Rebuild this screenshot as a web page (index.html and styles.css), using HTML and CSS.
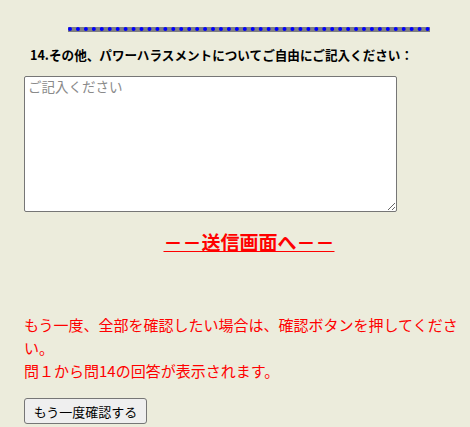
FILE: index.html
```html
<!DOCTYPE html>
<html lang="ja">
<head>
  <meta charset="UTF-8" />
  <title>パワーハラスメント アンケート</title>
  <link rel="stylesheet" href="styles.css">
</head>
<body>

<div class="wrap">
  <hr class="dots" />
  <p class="q">14.その他、パワーハラスメントについてご自由にご記入ください：</p>
  <textarea class="answer" placeholder="ご記入ください"></textarea>
  <p class="send"><a href="#">－－送信画面へ－－</a></p>
  <p class="note">もう一度、全部を確認したい場合は、確認ボタンを押してください。<br>問１から問14の回答が表示されます。</p>
  <button class="again">もう一度確認する</button>
</div>

</body>
</html>
```

FILE: styles.css
```css
body {
  margin: 0;
  background: #ececdc;
  font-family: "Noto Sans CJK JP", "Noto Sans", sans-serif;
  color: #000;
}
.wrap {
  display: flow-root;
  padding: 0 0 0 24px;
}
.dots {
  width: 362px;
  height: 1px;
  margin: 27px 0 0 44px;
  border: 0;
  border-top: 4px dotted #0000ff;
  background: #808080;
}
.q {
  margin: 14px 0 0 6px;
  font-size: 12.6px;
  font-weight: bold;
  line-height: 18px;
}
.answer {
  display: block;
  box-sizing: border-box;
  width: 373px;
  height: 136px;
  margin-top: 12px;
  padding: 1px 3px;
  border: 1px solid #767676;
  border-radius: 2px;
  background: #fff;
  font-family: "Noto Sans CJK JP", sans-serif;
  font-size: 13.5px;
  line-height: 16px;
}
.answer::placeholder { color: #8a8a8a; }
.send {
  margin: 19px 8px 0 0;
  padding-left: 12px;
  text-align: center;
  font-size: 19px;
  font-weight: bold;
  line-height: 22px;
}
.send a { color: #ff0000; }
.note {
  margin: 60px 0 0;
  color: #ff0000;
  font-size: 15px;
  line-height: 23px;
}
.again {
  display: block;
  box-sizing: border-box;
  width: 123px;
  height: 26px;
  margin-top: 16px;
  padding: 0 6px;
  border: 1px solid #767676;
  border-radius: 3px;
  background: #efefef;
  font-family: "Noto Sans CJK JP", sans-serif;
  font-size: 13px;
  color: #000;
}
```
